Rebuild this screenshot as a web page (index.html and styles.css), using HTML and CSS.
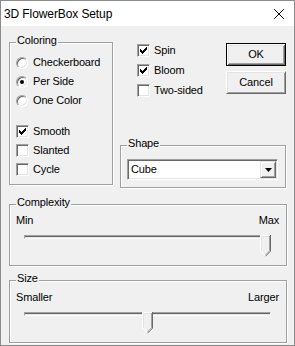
FILE: index.html
```html
<!DOCTYPE html>
<html>
<head>
<meta charset="utf-8">
<link rel="stylesheet" href="styles.css">
</head>
<body>
<div class="window">
  <div class="titlebar">
    <span class="title">3D FlowerBox Setup</span>
    <svg class="close" width="10" height="10" viewBox="0 0 10 10"><path d="M0.2 0.2L9.8 9.8M9.8 0.2L0.2 9.8" stroke="#000" stroke-width="1" fill="none"/></svg>
  </div>
  <div class="content">
    <div class="top">
      <fieldset class="group coloring">
        <legend>Coloring</legend>
        <div class="opts">
          <label class="opt"><span class="radio"></span>Checkerboard</label>
          <label class="opt"><span class="radio on"></span>Per Side</label>
          <label class="opt"><span class="radio"></span>One Color</label>
        </div>
        <div class="opts checks">
          <label class="opt"><span class="check"><svg class="tick" width="7" height="7" viewBox="0 0 7 7"><path d="M6 0h1v1h-1zM5 1h2v1h-2zM0 2h1v1h-1zM4 2h3v1h-3zM0 3h2v1h-2zM3 3h3v1h-3zM0 4h5v1h-5zM1 5h3v1h-3zM2 6h1v1h-1z" fill="#000"/></svg></span>Smooth</label>
          <label class="opt"><span class="check"></span>Slanted</label>
          <label class="opt"><span class="check"></span>Cycle</label>
        </div>
      </fieldset>
      <div class="right">
        <div class="upper">
          <div class="opts flags">
            <label class="opt"><span class="check"><svg class="tick" width="7" height="7" viewBox="0 0 7 7"><path d="M6 0h1v1h-1zM5 1h2v1h-2zM0 2h1v1h-1zM4 2h3v1h-3zM0 3h2v1h-2zM3 3h3v1h-3zM0 4h5v1h-5zM1 5h3v1h-3zM2 6h1v1h-1z" fill="#000"/></svg></span>Spin</label>
            <label class="opt"><span class="check"><svg class="tick" width="7" height="7" viewBox="0 0 7 7"><path d="M6 0h1v1h-1zM5 1h2v1h-2zM0 2h1v1h-1zM4 2h3v1h-3zM0 3h2v1h-2zM3 3h3v1h-3zM0 4h5v1h-5zM1 5h3v1h-3zM2 6h1v1h-1z" fill="#000"/></svg></span>Bloom</label>
            <label class="opt"><span class="check"></span>Two-sided</label>
          </div>
          <div class="buttons">
            <button class="btn default">OK</button>
            <button class="btn">Cancel</button>
          </div>
        </div>
        <fieldset class="group shape">
          <legend>Shape</legend>
          <div class="combo">
            <span class="combo-value">Cube</span>
            <span class="combo-btn"><svg width="7" height="4" viewBox="0 0 7 4"><path d="M0 0h7L3.5 4z" fill="#000"/></svg></span>
          </div>
        </fieldset>
      </div>
    </div>
    <fieldset class="group slider-group complexity">
      <legend>Complexity</legend>
      <div class="labels"><span>Min</span><span>Max</span></div>
      <div class="slider">
        <div class="channel"></div>
        <svg class="thumb" style="--pos:1" width="11" height="22" viewBox="0 0 11 22">
          <path d="M0 0H11V16L5.5 21.5L0 16Z" fill="#f0f0f0"/>
          <path d="M0.5 16.2V0.5H10" stroke="#fff" fill="none"/>
          <path d="M1.5 15.8V1.5H9" stroke="#e3e3e3" fill="none"/>
          <path d="M0.5 16L5.5 21" stroke="#fff" fill="none"/>
          <path d="M10.5 0V16.2L5.5 21.2" stroke="#696969" fill="none"/>
          <path d="M9.5 1V15.8L5.5 19.8" stroke="#a0a0a0" fill="none"/>
        </svg>
      </div>
    </fieldset>
    <fieldset class="group slider-group size">
      <legend>Size</legend>
      <div class="labels"><span>Smaller</span><span>Larger</span></div>
      <div class="slider">
        <div class="channel"></div>
        <svg class="thumb" style="--pos:0.5" width="11" height="22" viewBox="0 0 11 22">
          <path d="M0 0H11V16L5.5 21.5L0 16Z" fill="#f0f0f0"/>
          <path d="M0.5 16.2V0.5H10" stroke="#fff" fill="none"/>
          <path d="M1.5 15.8V1.5H9" stroke="#e3e3e3" fill="none"/>
          <path d="M0.5 16L5.5 21" stroke="#fff" fill="none"/>
          <path d="M10.5 0V16.2L5.5 21.2" stroke="#696969" fill="none"/>
          <path d="M9.5 1V15.8L5.5 19.8" stroke="#a0a0a0" fill="none"/>
        </svg>
      </div>
    </fieldset>
  </div>
</div>
</body>
</html>
```

FILE: styles.css
```css
body {
  margin: 0;
  background: #ffffff;
}

.window {
  width: 295px;
  height: 346px;
  box-sizing: border-box;
  border: 1px solid #8c8c8c;
  background: #f0f0f0;
  font: 11px/13px "Liberation Sans", Arial, sans-serif;
  letter-spacing: -0.15px;
  color: #000;
  display: flex;
  flex-direction: column;
}

.titlebar {
  height: 25px;
  flex: none;
  background: #ffffff;
  display: flex;
  align-items: center;
  justify-content: space-between;
  padding: 0 10px 0 3px;
}

.title {
  font: 12px/16px "Liberation Sans", Arial, sans-serif;
  letter-spacing: -0.1px;
}

.close {
  display: block;
}

.content {
  padding: 8px 7px 0 8px;
  display: flex;
  flex-direction: column;
}

.top {
  display: grid;
  grid-template-columns: 104px 166px;
  column-gap: 7px;
  align-items: start;
}

.group {
  margin: 0;
  min-width: 0;
  border: 1px solid #a0a0a0;
  box-shadow: inset 1px 1px #ffffff, 1px 1px #ffffff;
  padding: 0 7px 7px 6px;
}

.group legend {
  padding: 0 1px 4px;
  line-height: 13px;
  background: #f0f0f0;
}

.group.coloring {
  padding: 2px 6px 5px 6px;
}

.opts {
  display: flex;
  flex-direction: column;
}

.opt {
  display: flex;
  align-items: center;
  height: 19px;
  white-space: nowrap;
}

.checks {
  margin-top: 12px;
}

.radio {
  width: 12px;
  height: 12px;
  box-sizing: border-box;
  border-radius: 50%;
  border: 1px solid;
  border-color: #a0a0a0 #ffffff #ffffff #a0a0a0;
  box-shadow: inset 1px 1px #696969, inset -1px -1px #e3e3e3;
  background: #ffffff;
  margin-right: 5px;
  display: flex;
  align-items: center;
  justify-content: center;
  flex: none;
}

.radio.on::after {
  content: "";
  width: 4px;
  height: 4px;
  border-radius: 50%;
  background: #000;
}

.check {
  width: 13px;
  height: 13px;
  box-sizing: border-box;
  border: 1px solid;
  border-color: #a0a0a0 #ffffff #ffffff #a0a0a0;
  box-shadow: inset 1px 1px #696969, inset -1px -1px #e3e3e3;
  background: #ffffff;
  margin-right: 4px;
  padding: 2px;
  flex: none;
}

.tick {
  display: block;
  shape-rendering: crispEdges;
}

.right {
  display: flex;
  flex-direction: column;
}

.upper {
  display: flex;
  justify-content: space-between;
  align-items: flex-start;
  height: 66px;
}

.flags {
  margin: 6px 0 0 17px;
}

.flags .opt {
  height: 20px;
}

.buttons {
  display: flex;
  flex-direction: column;
  gap: 5px;
  margin-top: 9px;
}

.btn {
  width: 60px;
  height: 23px;
  box-sizing: border-box;
  padding: 0;
  font: inherit;
  letter-spacing: inherit;
  color: #000;
  background: #f0f0f0;
  border: 1px solid;
  border-color: #ffffff #696969 #696969 #ffffff;
  box-shadow: inset 1px 1px #e3e3e3, inset -1px -1px #a0a0a0;
}

.btn.default {
  border-color: #000;
  box-shadow: inset 1px 1px #ffffff, inset -1px -1px #696969, inset 2px 2px #e3e3e3, inset -2px -2px #a0a0a0;
}

.group.shape {
  margin-top: 37px;
  padding: 5px 7px 7px 6px;
}

.combo {
  height: 21px;
  box-sizing: border-box;
  border: 1px solid;
  border-color: #a0a0a0 #ffffff #ffffff #a0a0a0;
  box-shadow: inset 1px 1px #696969, inset -1px -1px #e3e3e3;
  background: #ffffff;
  padding: 1px;
  display: flex;
}

.combo-value {
  flex: 1;
  padding-left: 2px;
  line-height: 17px;
}

.combo-btn {
  width: 16px;
  height: 17px;
  box-sizing: border-box;
  border: 1px solid;
  border-color: #e3e3e3 #696969 #696969 #e3e3e3;
  box-shadow: inset 1px 1px #ffffff, inset -1px -1px #a0a0a0;
  background: #f0f0f0;
  display: flex;
  align-items: center;
  justify-content: center;
}

.combo-btn svg {
  display: block;
}

.group.complexity {
  margin-top: 8px;
  padding-top: 1px;
}

.group.size {
  margin-top: 6px;
  padding-top: 2px;
}

.labels {
  display: flex;
  justify-content: space-between;
  line-height: 13px;
}

.slider {
  position: relative;
  height: 23px;
  margin: 4px 8px 0 8px;
}

.size .slider {
  margin-top: 3px;
}

.channel {
  height: 4px;
  margin-top: 8px;
  box-sizing: border-box;
  border: 1px solid;
  border-color: #a0a0a0 #ffffff #ffffff #a0a0a0;
  box-shadow: inset 0 1px #696969, inset 0 -1px #e3e3e3;
}

.thumb {
  position: absolute;
  top: 0;
  left: calc((100% - 11px) * var(--pos));
  display: block;
}
```
